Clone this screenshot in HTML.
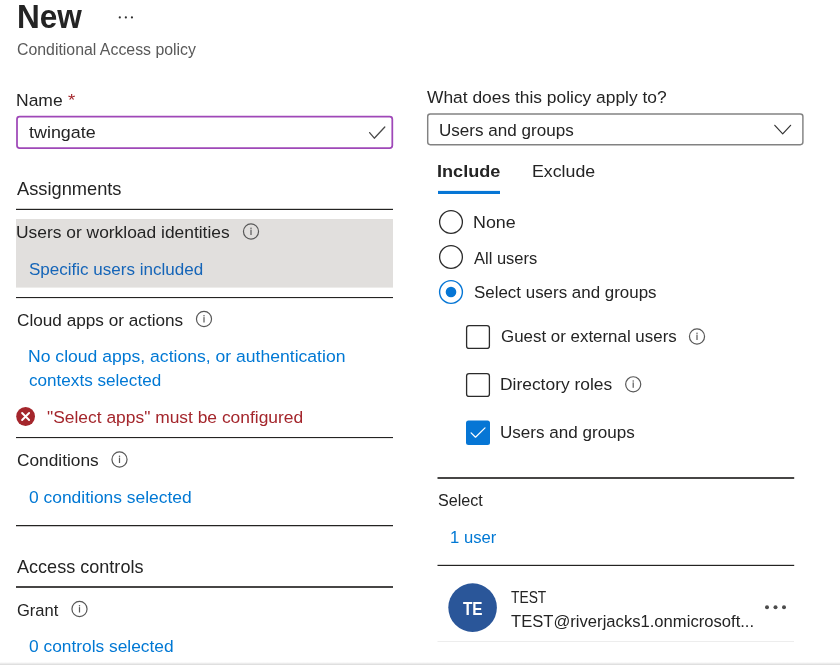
<!DOCTYPE html>
<html><head><meta charset="utf-8"><title>New Conditional Access policy</title>
<style>
html,body{margin:0;padding:0;background:#fff;}
body{width:840px;height:665px;position:relative;overflow:hidden;font-family:"Liberation Sans",sans-serif;}
.t{position:absolute;white-space:nowrap;transform-origin:0 0;display:block;}
.a{position:absolute;display:block;}
#root{position:absolute;left:0;top:0;width:840px;height:665px;will-change:transform;}
</style></head><body><div id="root">
<svg class="a" style="left:0;top:0" width="840" height="665" viewBox="0 0 840 665">
<!-- gray selected row -->
<rect x="16" y="219" width="377" height="68.6" fill="#e1dfdd"/>
<!-- name input -->
<rect x="17.0" y="116.7" width="375.3" height="31.5" rx="2.6" fill="#fff" stroke="#9f48b8" stroke-width="1.75"/>
<path d="M369.6 132.6 L374.3 138.2 L384.8 127" fill="none" stroke="#4a4a4a" stroke-width="1.3" stroke-linecap="round" stroke-linejoin="round"/>
<!-- header dots -->
<circle cx="119.8" cy="17.4" r="1.1" fill="#2e2e2e"/><circle cx="125.85" cy="17.4" r="1.1" fill="#2e2e2e"/><circle cx="131.95" cy="17.4" r="1.1" fill="#2e2e2e"/>
<!-- left dividers -->
<g fill="#242322">
<rect x="16" y="208.8" width="377" height="1.2"/>
<rect x="16" y="297" width="377" height="1.1"/>
<rect x="16" y="437" width="377" height="1.1"/>
<rect x="16" y="525" width="377" height="1.25"/>
<rect x="437.5" y="564.8" width="356.7" height="1.2"/>
</g>
<g fill="#474645">
<rect x="16" y="586" width="377" height="2"/>
<rect x="437.5" y="477" width="356.7" height="2"/>
</g>
<rect x="437.5" y="641" width="356.5" height="1" fill="#ededed"/>
<!-- bottom bar -->
<defs><linearGradient id="bb" x1="0" y1="0" x2="0" y2="1"><stop offset="0" stop-color="#ffffff"/><stop offset="1" stop-color="#d9d9d9"/></linearGradient></defs>
<rect x="0" y="662" width="840" height="3" fill="url(#bb)"/>
<!-- dropdown -->
<rect x="427.7" y="113.9" width="375.2" height="30.8" rx="2.6" fill="#fff" stroke="#828282" stroke-width="1.45"/>
<path d="M774.8 125.3 L782.7 133.8 L790.6 125.3" fill="none" stroke="#333" stroke-width="1.2" stroke-linecap="round" stroke-linejoin="round"/>
<!-- tab underline -->
<rect x="438" y="190.9" width="62" height="3.1" fill="#0676d5"/>
<!-- radios -->
<circle cx="451" cy="222" r="11.4" fill="#fff" stroke="#2b2b2b" stroke-width="1.3"/>
<circle cx="451" cy="257" r="11.4" fill="#fff" stroke="#2b2b2b" stroke-width="1.3"/>
<circle cx="451" cy="292" r="11.4" fill="#fff" stroke="#0676d5" stroke-width="1.4"/>
<circle cx="451" cy="292" r="5.3" fill="#0676d5"/>
<!-- checkboxes -->
<rect x="466.6" y="325.6" width="22.8" height="22.8" rx="2.5" fill="#fff" stroke="#2b2b2b" stroke-width="1.3"/>
<rect x="466.6" y="373.6" width="22.8" height="22.8" rx="2.5" fill="#fff" stroke="#2b2b2b" stroke-width="1.3"/>
<rect x="466" y="420.5" width="24" height="24.5" rx="2.5" fill="#0676d5"/>
<path d="M471.1 432.9 L475.5 437.2 L485 427.9" fill="none" stroke="#fff" stroke-width="1.25" stroke-linecap="round" stroke-linejoin="round"/>
<!-- avatar -->
<circle cx="472.6" cy="607.6" r="24.3" fill="#2a5699"/>
<!-- more dots -->
<circle cx="767" cy="607.2" r="2" fill="#4c4c4c"/><circle cx="775.5" cy="607.2" r="2" fill="#4c4c4c"/><circle cx="784" cy="607.2" r="2" fill="#4c4c4c"/>
<!-- info + error icons -->
<g transform="translate(251 231.5)"><circle cx="0" cy="0" r="7.55" fill="none" stroke="#585858" stroke-width="1.2"/><circle cx="0" cy="-3.3" r="0.75" fill="#5a5a5a"/><rect x="-0.6" y="-1.9" width="1.2" height="5.4" fill="#5a5a5a"/></g>
<g transform="translate(204 319)"><circle cx="0" cy="0" r="7.55" fill="none" stroke="#585858" stroke-width="1.2"/><circle cx="0" cy="-3.3" r="0.75" fill="#5a5a5a"/><rect x="-0.6" y="-1.9" width="1.2" height="5.4" fill="#5a5a5a"/></g>
<g transform="translate(119.5 459.5)"><circle cx="0" cy="0" r="7.55" fill="none" stroke="#585858" stroke-width="1.2"/><circle cx="0" cy="-3.3" r="0.75" fill="#5a5a5a"/><rect x="-0.6" y="-1.9" width="1.2" height="5.4" fill="#5a5a5a"/></g>
<g transform="translate(79.5 609)"><circle cx="0" cy="0" r="7.55" fill="none" stroke="#585858" stroke-width="1.2"/><circle cx="0" cy="-3.3" r="0.75" fill="#5a5a5a"/><rect x="-0.6" y="-1.9" width="1.2" height="5.4" fill="#5a5a5a"/></g>
<g transform="translate(697 336.5)"><circle cx="0" cy="0" r="7.55" fill="none" stroke="#585858" stroke-width="1.2"/><circle cx="0" cy="-3.3" r="0.75" fill="#5a5a5a"/><rect x="-0.6" y="-1.9" width="1.2" height="5.4" fill="#5a5a5a"/></g>
<g transform="translate(633.2 384.3)"><circle cx="0" cy="0" r="7.55" fill="none" stroke="#585858" stroke-width="1.2"/><circle cx="0" cy="-3.3" r="0.75" fill="#5a5a5a"/><rect x="-0.6" y="-1.9" width="1.2" height="5.4" fill="#5a5a5a"/></g>
<g transform="translate(25.6 416.5)"><circle cx="0" cy="0" r="9.4" fill="#a4262c"/><path d="M-3.5 -3.5 L3.5 3.5 M3.5 -3.5 L-3.5 3.5" stroke="#fff" stroke-width="1.9" stroke-linecap="round" fill="none"/></g>
</svg>

<span id="t_new" class="t" style="left:16.79px;top:-3.00px;font-size:33px;line-height:40px;color:#242424;font-weight:700;transform:scaleX(0.9564)">New</span>
<span id="t_sub" class="t" style="left:16.70px;top:40.00px;font-size:16px;line-height:19px;color:#595959;font-weight:400;transform:scaleX(0.9911)">Conditional Access policy</span>
<span id="t_name" class="t" style="left:15.99px;top:90.00px;font-size:17.4px;line-height:21px;color:#242424;font-weight:400;transform:scaleX(1.0063)">Name</span>
<span id="t_star" class="t" style="left:67.50px;top:90.00px;font-size:17.4px;line-height:21px;color:#a4262c;font-weight:400;transform:scaleX(1.0714)">*</span>
<span id="t_twin" class="t" style="left:29.00px;top:122.00px;font-size:17.4px;line-height:21px;color:#242424;font-weight:400;transform:scaleX(1.0296)">twingate</span>
<span id="t_asg" class="t" style="left:17.00px;top:177.00px;font-size:19px;line-height:23px;color:#242424;font-weight:400;transform:scaleX(0.9606)">Assignments</span>
<span id="t_uwi" class="t" style="left:16.00px;top:222.00px;font-size:17.4px;line-height:21px;color:#242424;font-weight:400;transform:scaleX(1.0004)">Users or workload identities</span>
<span id="t_spec" class="t" style="left:28.50px;top:259.00px;font-size:17.4px;line-height:21px;color:#1565b8;font-weight:400;transform:scaleX(0.9792)">Specific users included</span>
<span id="t_cloud" class="t" style="left:17.00px;top:310.00px;font-size:17.4px;line-height:21px;color:#242424;font-weight:400;transform:scaleX(0.9881)">Cloud apps or actions</span>
<span id="t_no1" class="t" style="left:27.74px;top:346.00px;font-size:17.4px;line-height:21px;color:#0078d4;font-weight:400;transform:scaleX(1.0103)">No cloud apps, actions, or authentication</span>
<span id="t_no2" class="t" style="left:29.00px;top:370.00px;font-size:17.4px;line-height:21px;color:#0078d4;font-weight:400;transform:scaleX(0.9836)">contexts selected</span>
<span id="t_err" class="t" style="left:46.50px;top:407.00px;font-size:17.4px;line-height:21px;color:#a4262c;font-weight:400;transform:scaleX(1.0008)">&quot;Select apps&quot; must be configured</span>
<span id="t_cond" class="t" style="left:17.00px;top:450.00px;font-size:17.4px;line-height:21px;color:#242424;font-weight:400;transform:scaleX(0.9942)">Conditions</span>
<span id="t_0c" class="t" style="left:28.50px;top:487.00px;font-size:17.4px;line-height:21px;color:#0078d4;font-weight:400;transform:scaleX(1.0016)">0 conditions selected</span>
<span id="t_acc" class="t" style="left:17.00px;top:555.00px;font-size:19px;line-height:23px;color:#242424;font-weight:400;transform:scaleX(0.9506)">Access controls</span>
<span id="t_grant" class="t" style="left:17.00px;top:600.00px;font-size:17.4px;line-height:21px;color:#242424;font-weight:400;transform:scaleX(0.9505)">Grant</span>
<span id="t_0g" class="t" style="left:28.50px;top:636.00px;font-size:17.4px;line-height:21px;color:#0078d4;font-weight:400;transform:scaleX(0.9977)">0 controls selected</span>
<span id="t_what" class="t" style="left:427.00px;top:87.00px;font-size:17.4px;line-height:21px;color:#242424;font-weight:400;transform:scaleX(0.9997)">What does this policy apply to?</span>
<span id="t_dd" class="t" style="left:438.52px;top:120.00px;font-size:17.4px;line-height:21px;color:#242424;font-weight:400;transform:scaleX(0.9812)">Users and groups</span>
<span id="t_inc" class="t" style="left:437.14px;top:162.00px;font-size:17px;line-height:20px;color:#242424;font-weight:700;transform:scaleX(1.0645)">Include</span>
<span id="t_exc" class="t" style="left:532.25px;top:162.00px;font-size:17px;line-height:20px;color:#242424;font-weight:400;transform:scaleX(1.0453)">Exclude</span>
<span id="t_none" class="t" style="left:473.47px;top:212.00px;font-size:17.4px;line-height:21px;color:#242424;font-weight:400;transform:scaleX(1.0275)">None</span>
<span id="t_all" class="t" style="left:474.00px;top:248.00px;font-size:17.4px;line-height:21px;color:#242424;font-weight:400;transform:scaleX(0.9479)">All users</span>
<span id="t_sel" class="t" style="left:473.80px;top:282.00px;font-size:17.4px;line-height:21px;color:#242424;font-weight:400;transform:scaleX(0.9731)">Select users and groups</span>
<span id="t_guest" class="t" style="left:501.00px;top:326.00px;font-size:17.4px;line-height:21px;color:#242424;font-weight:400;transform:scaleX(0.9721)">Guest or external users</span>
<span id="t_dir" class="t" style="left:500.00px;top:374.00px;font-size:17.4px;line-height:21px;color:#242424;font-weight:400;transform:scaleX(1.0009)">Directory roles</span>
<span id="t_uag" class="t" style="left:500.02px;top:422.00px;font-size:17.4px;line-height:21px;color:#242424;font-weight:400;transform:scaleX(0.9812)">Users and groups</span>
<span id="t_select" class="t" style="left:438.00px;top:490.00px;font-size:17.4px;line-height:21px;color:#242424;font-weight:400;transform:scaleX(0.9278)">Select</span>
<span id="t_1u" class="t" style="left:449.54px;top:527.00px;font-size:17.4px;line-height:21px;color:#0078d4;font-weight:400;transform:scaleX(0.9570)">1 user</span>
<span id="t_test" class="t" style="left:510.70px;top:587.00px;font-size:17.4px;line-height:21px;color:#242424;font-weight:400;transform:scaleX(0.7943)">TEST</span>
<span id="t_mail" class="t" style="left:510.70px;top:611.00px;font-size:17.4px;line-height:21px;color:#242424;font-weight:400;transform:scaleX(0.9555)">TEST@riverjacks1.onmicrosoft...</span>
<span id="t_te" class="t" style="left:463.00px;top:599.00px;font-size:17.5px;line-height:21px;color:#ffffff;font-weight:700;transform:scaleX(0.8760)">TE</span>
</div></body></html>
